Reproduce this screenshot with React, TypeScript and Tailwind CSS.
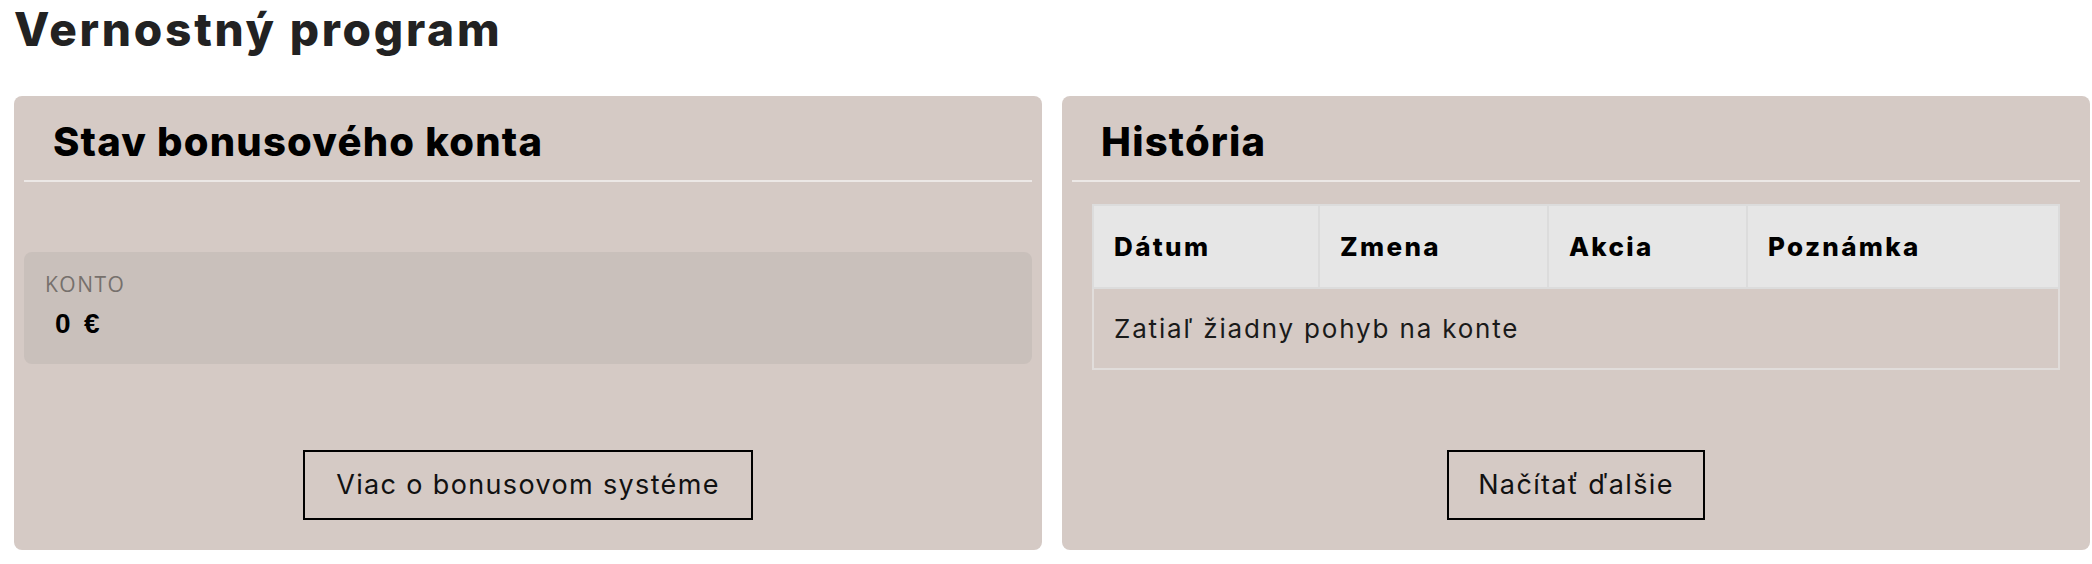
const sans = "font-['Inter','Liberation_Sans',sans-serif]";

function Panel(props: { title: string; children: React.ReactNode; action: string; actionWidth: string }) {
  return (
    <section className="flex min-w-0 flex-col rounded-[8px] bg-[#d5cac5] pb-[30px]">
      <header className="mx-[10px] border-b-2 border-[#ece8e6] pt-[22px] pb-[14px]">
        <h2 className={`${sans} pl-[29px] text-[40px] font-extrabold leading-[48px] tracking-[0.03em] text-black`}>
          {props.title}
        </h2>
      </header>
      <div className="flex flex-1 flex-col">{props.children}</div>
      <div className="mt-auto flex justify-center">
        <button
          className={`${sans} flex h-[70px] items-center justify-center border-2 border-black text-[27px] leading-[36px] tracking-[0.05em] text-[#111] ${props.actionWidth}`}
          type="button"
        >
          {props.action}
        </button>
      </div>
    </section>
  );
}

function AccountBox() {
  return (
    <div className="mx-[10px] mt-[70px] mb-[83px] rounded-[8px] bg-[#c9c0bb] pt-[18px] pb-[24px] pl-[21px]">
      <div className="font-['Open_Sans',sans-serif] text-[21px] font-medium uppercase leading-[28px] tracking-[0.07em] text-[#76706c]">
        Konto
      </div>
      <div className="mt-[10px] pl-[10px] font-['Liberation_Sans',Arial,sans-serif] text-[28px] font-bold leading-[32px] tracking-[0.1em] text-black">
        0 €
      </div>
    </div>
  );
}

function HistoryTable() {
  const head = ["Dátum", "Zmena", "Akcia", "Poznámka"];
  const widths = ["w-[226px]", "w-[229px]", "w-[199px]", ""];
  return (
    <div className="mx-[30px] mt-[22px] mb-[80px]">
      <table className={`${sans} w-full table-fixed border-collapse border-2 border-[#e1dddb]`}>
        <thead>
          <tr className="bg-[#e6e6e6]">
            {head.map((label, i) => (
              <th
                key={label}
                className={`h-[83px] border-2 border-[#dcdcdc] pl-[20px] text-left text-[26px] font-extrabold tracking-[0.09em] text-black ${widths[i]}`}
              >
                {label}
              </th>
            ))}
          </tr>
        </thead>
        <tbody>
          <tr>
            <td
              colSpan={4}
              className="h-[81px] border-2 border-[#e1dddb] pl-[20px] text-[26px] tracking-[0.07em] text-[#1a1a1a]"
            >
              Zatiaľ žiadny pohyb na konte
            </td>
          </tr>
        </tbody>
      </table>
    </div>
  );
}

export default function App() {
  return (
    <div className="min-h-[564px] bg-white pl-[14px] pr-[2px] pt-[6px]">
      <h1 className={`${sans} mb-[44px] text-[46px] font-extrabold leading-[46px] tracking-[0.06em] text-[#222]`}>
        Vernostný program
      </h1>
      <div className="grid grid-cols-2 gap-[20px]">
        <Panel title="Stav bonusového konta" action="Viac o bonusovom systéme" actionWidth="w-[450px]">
          <AccountBox />
        </Panel>
        <Panel title="História" action="Načítať ďalšie" actionWidth="w-[258px]">
          <HistoryTable />
        </Panel>
      </div>
    </div>
  );
}
